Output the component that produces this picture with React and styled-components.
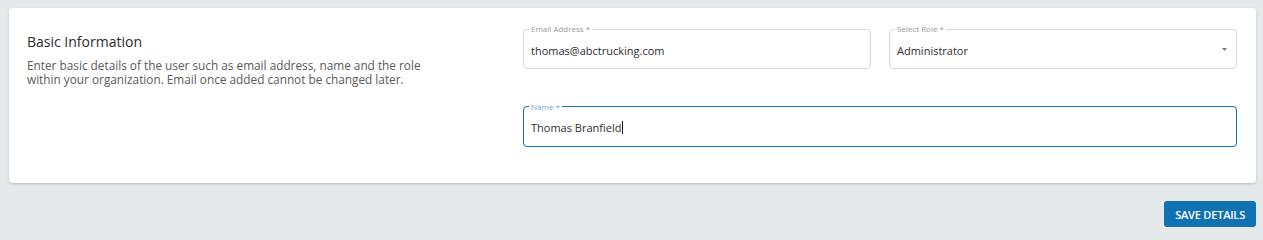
import React from "react";
import styled, { createGlobalStyle } from "styled-components";

const Global = createGlobalStyle`
  html, body { margin: 0; padding: 0; background: #e6e9ec; }
  body { font-family: "Open Sans", "Noto Sans", sans-serif; color: #333; }
  * { box-sizing: border-box; }
`;

const Page = styled.div`
  padding: 8px 7px 12px 9px;
  display: flex;
  flex-direction: column;
  gap: 18px;
`;

const Card = styled.section`
  background: #fff;
  border-radius: 4px;
  box-shadow: 0 1px 3px rgba(0, 0, 0, 0.14), 0 1px 1px rgba(0, 0, 0, 0.06);
  padding: 17px 19px 36px 18px;
  display: grid;
  grid-template-columns: 1fr 714px;
  min-height: 175px;
`;

const Intro = styled.div`
  padding-top: 7px;
`;

const Title = styled.h2`
  margin: 0 0 5px;
  font-size: 14px;
  font-weight: 400;
  line-height: 20px;
  color: #2b2b2b;
`;

const Desc = styled.p`
  margin: 0;
  font-size: 11.8px;
  line-height: 14px;
  color: #5a5a5a;
  max-width: 415px;
  padding-top: 1px;
`;

const Form = styled.div`
  display: grid;
  grid-template-columns: 1fr 1fr;
  column-gap: 18px;
  row-gap: 37px;
  padding-top: 4px;
`;

const Field = styled.label`
  position: relative;
  display: flex;
  align-items: center;
  height: 40px;
  padding: 0 8px;
  grid-column: ${(p) => (p.$full ? "1 / -1" : "auto")};
`;

const Outline = styled.fieldset`
  position: absolute;
  inset: -5px 0 0 0;
  margin: 0;
  padding: 0 5px;
  border: 1px solid ${(p) => (p.$focused ? "#1a6fac" : "#d9d9d9")};
  border-radius: 4px;
  pointer-events: none;
`;

const Legend = styled.legend`
  padding: 0 2px;
  font-size: 8px;
  line-height: 10px;
  color: ${(p) => (p.$focused ? "#6aa6d6" : "#9a9a9a")};
`;

const Value = styled.span`
  font-size: 11px;
  color: #2e2e2e;
  display: flex;
  align-items: center;
  flex: 1;
  padding-top: 2px;
`;

const Caret = styled.span`
  display: inline-block;
  width: 1px;
  height: 13px;
  background: #1a1a1a;
  margin-left: 1px;
`;

const Arrow = styled.svg`
  width: 5px;
  height: 3px;
  margin-right: 2px;
  margin-top: 1px;
`;

const Actions = styled.div`
  display: flex;
  justify-content: flex-end;
`;

const Button = styled.button`
  background: #1172b3;
  color: #fff;
  border: none;
  border-radius: 3px;
  height: 26px;
  padding: 0 11px;
  font-family: "Open Sans", sans-serif;
  font-size: 11px;
  font-weight: 600;
  letter-spacing: -0.2px;
  cursor: pointer;
`;

function OutlinedField({ label, focused, full, children }) {
  return (
    <Field $full={full}>
      <Outline $focused={focused}>
        <Legend $focused={focused}>{label}</Legend>
      </Outline>
      {children}
    </Field>
  );
}

export default function App() {
  return (
    <>
      <Global />
      <Page>
        <Card>
          <Intro>
            <Title>Basic Information</Title>
            <Desc>
              Enter basic details of the user such as email address, name and the role
              within your organization. Email once added cannot be changed later.
            </Desc>
          </Intro>
          <Form>
            <OutlinedField label="Email Address *">
              <Value>thomas@abctrucking.com</Value>
            </OutlinedField>
            <OutlinedField label="Select Role *">
              <Value>Administrator</Value>
              <Arrow viewBox="0 0 5 3">
                <path d="M0 0 L5 0 L2.5 3 Z" fill="#7a7a7a" />
              </Arrow>
            </OutlinedField>
            <OutlinedField label="Name *" focused full>
              <Value>
                Thomas Branfield
                <Caret />
              </Value>
            </OutlinedField>
          </Form>
        </Card>
        <Actions>
          <Button>SAVE DETAILS</Button>
        </Actions>
      </Page>
    </>
  );
}
